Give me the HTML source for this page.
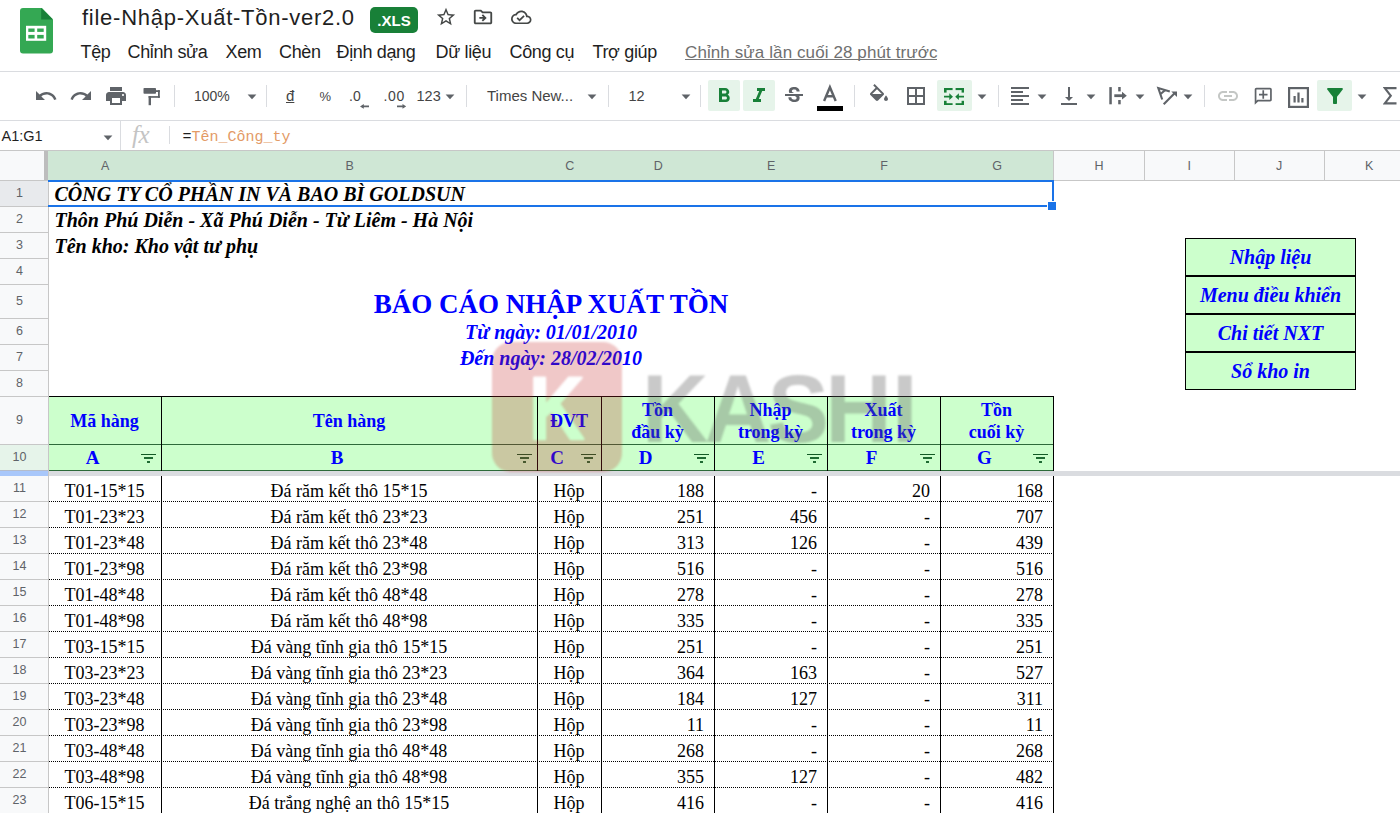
<!DOCTYPE html>
<html><head><meta charset="utf-8"><style>
html,body{margin:0;padding:0;width:1400px;height:813px;overflow:hidden;background:#fff;}
.t{position:absolute;white-space:nowrap;}
.r{position:absolute;}
</style></head><body>
<svg class="r" style="left:20px;top:8px;" width="33" height="46" viewBox="0 0 33 46"><path d="M3 0h19l11 11.5V42.5a3 3 0 0 1-3 3H3a3 3 0 0 1-3-3V3a3 3 0 0 1 3-3z" fill="#34a853"/><path d="M21.2 0L33 11.5H21.2z" fill="#188038"/><rect x="6" y="17.8" width="20.2" height="15" fill="#fff"/><rect x="8.3" y="20.5" width="6.3" height="3.4" fill="#34a853"/><rect x="17.2" y="20.5" width="6.5" height="3.4" fill="#34a853"/><rect x="8.3" y="26.9" width="6.3" height="3.6" fill="#34a853"/><rect x="17.2" y="26.9" width="6.5" height="3.6" fill="#34a853"/></svg>
<div class="t" style="left:82px;top:7.38px;font-size:22px;line-height:22px;font-family:'Liberation Sans', sans-serif;color:#1f1f1f;font-weight:normal;font-style:normal;letter-spacing:0.74px;">file-Nhập-Xuất-Tồn-ver2.0</div>
<div class="r" style="left:370px;top:7px;width:48px;height:26px;background:#188038;border-radius:5px;"></div>
<div class="t" style="left:370px;width:48px;text-align:center;top:12.80px;font-size:15px;line-height:15px;font-family:'Liberation Sans', sans-serif;color:#fff;font-weight:bold;font-style:normal;">.XLS</div>
<svg class="r" style="left:435px;top:6px;" width="22" height="22" viewBox="0 0 24 24"><path fill="#444746" d="M22 9.24l-7.19-.62L12 2 9.19 8.63 2 9.24l5.46 4.73L5.82 21 12 17.27 18.18 21l-1.63-7.03L22 9.24zM12 15.4l-3.76 2.27 1-4.28-3.32-2.88 4.38-.38L12 6.1l1.71 4.04 4.38.38-3.32 2.88 1 4.28L12 15.4z"/></svg>
<svg class="r" style="left:472px;top:6.3px;" width="22" height="22" viewBox="0 0 24 24"><path fill="#444746" d="M20 6h-8l-2-2H4c-1.1 0-1.99.9-1.99 2L2 18c0 1.1.9 2 2 2h16c1.1 0 2-.9 2-2V8c0-1.1-.9-2-2-2zm0 12H4V6h5.17l2 2H20v10zm-7.84-6H8v2h4.16l-1.59 1.59L11.99 17 16 13.01 11.99 9l-1.41 1.41L12.16 12z"/></svg>
<svg class="r" style="left:511px;top:7px;" width="20.5" height="20.5" viewBox="0 0 24 24"><path fill="#444746" d="M19.35 10.04C18.67 6.59 15.64 4 12 4 9.11 4 6.6 5.64 5.35 8.04 2.34 8.36 0 10.91 0 14c0 3.31 2.69 6 6 6h13c2.76 0 5-2.24 5-5 0-2.64-2.05-4.78-4.65-4.96zM19 18H6c-2.21 0-4-1.79-4-4 0-2.05 1.53-3.76 3.56-3.97l1.07-.11.5-.95C8.08 7.14 9.94 6 12 6c2.62 0 4.88 1.86 5.39 4.43l.3 1.5 1.53.11c1.56.1 2.78 1.41 2.78 2.96 0 1.65-1.35 3-3 3zm-9-3.82l-2.09-2.09L6.5 13.5 10 17l6.01-6.01-1.41-1.41z"/></svg>
<div class="t" style="left:80.5px;top:42.96px;font-size:18px;line-height:18px;font-family:'Liberation Sans', sans-serif;color:#1f1f1f;font-weight:normal;font-style:normal;letter-spacing:-0.35px;">Tệp</div>
<div class="t" style="left:127.5px;top:42.96px;font-size:18px;line-height:18px;font-family:'Liberation Sans', sans-serif;color:#1f1f1f;font-weight:normal;font-style:normal;letter-spacing:-0.35px;">Chỉnh sửa</div>
<div class="t" style="left:225.5px;top:42.96px;font-size:18px;line-height:18px;font-family:'Liberation Sans', sans-serif;color:#1f1f1f;font-weight:normal;font-style:normal;letter-spacing:-0.35px;">Xem</div>
<div class="t" style="left:279px;top:42.96px;font-size:18px;line-height:18px;font-family:'Liberation Sans', sans-serif;color:#1f1f1f;font-weight:normal;font-style:normal;letter-spacing:-0.35px;">Chèn</div>
<div class="t" style="left:336.5px;top:42.96px;font-size:18px;line-height:18px;font-family:'Liberation Sans', sans-serif;color:#1f1f1f;font-weight:normal;font-style:normal;letter-spacing:-0.35px;">Định dạng</div>
<div class="t" style="left:435.5px;top:42.96px;font-size:18px;line-height:18px;font-family:'Liberation Sans', sans-serif;color:#1f1f1f;font-weight:normal;font-style:normal;letter-spacing:-0.35px;">Dữ liệu</div>
<div class="t" style="left:509.5px;top:42.96px;font-size:18px;line-height:18px;font-family:'Liberation Sans', sans-serif;color:#1f1f1f;font-weight:normal;font-style:normal;letter-spacing:-0.35px;">Công cụ</div>
<div class="t" style="left:592.5px;top:42.96px;font-size:18px;line-height:18px;font-family:'Liberation Sans', sans-serif;color:#1f1f1f;font-weight:normal;font-style:normal;letter-spacing:-0.35px;">Trợ giúp</div>
<div class="t" style="left:685px;top:43.61px;font-size:17px;line-height:17px;font-family:'Liberation Sans', sans-serif;color:#6f6f6f;font-weight:normal;font-style:normal;letter-spacing:0.1px;">Chỉnh sửa lần cuối 28 phút trước</div>
<div class="r" style="left:685px;top:58.6px;width:252px;height:1.1px;background:#777;"></div>
<div class="r" style="left:0px;top:71px;width:1400px;height:1px;background:#dadce0;"></div>
<svg class="r" style="left:34.0px;top:84.0px;" width="24" height="24" viewBox="0 0 24 24"><path fill="#5f6368" d="M12.5 8c-2.65 0-5.05.99-6.9 2.6L2 7v9h9l-3.62-3.62c1.39-1.16 3.16-1.88 5.12-1.88 3.54 0 6.55 2.31 7.6 5.5l2.37-.78C21.08 11.03 17.15 8 12.5 8z"/></svg>
<svg class="r" style="left:69.0px;top:84.0px;" width="24" height="24" viewBox="0 0 24 24"><path fill="#5f6368" d="M18.4 10.6C16.55 8.99 14.15 8 11.5 8c-4.65 0-8.58 3.03-9.96 7.22L3.9 16c1.05-3.19 4.05-5.5 7.6-5.5 1.95 0 3.73.72 5.12 1.88L13 16h9V7l-3.6 3.6z"/></svg>
<svg class="r" style="left:104.0px;top:84.0px;" width="24" height="24" viewBox="0 0 24 24"><path fill="#5f6368" d="M19 8H5c-1.66 0-3 1.34-3 3v6h4v4h12v-4h4v-6c0-1.66-1.34-3-3-3zm-3 11H8v-5h8v5zm3-7c-.55 0-1-.45-1-1s.45-1 1-1 1 .45 1 1-.45 1-1 1zm-1-9H6v4h12V3z"/></svg>
<svg class="r" style="left:140px;top:85px;" width="22" height="22" viewBox="0 0 22 22"><g fill="#5f6368"><rect x="3.5" y="3" width="12.5" height="5.8" rx="0.8"/><rect x="16" y="5.2" width="3.8" height="1.8"/><rect x="18" y="5.2" width="1.8" height="7.6"/><rect x="8.6" y="11.1" width="11.2" height="1.7"/><rect x="8.6" y="11.1" width="2.4" height="9.1"/></g></svg>
<div class="r" style="left:174px;top:85px;width:1px;height:22px;background:#dadce0;"></div>
<div class="t" style="left:194px;top:89.15px;font-size:14px;line-height:14px;font-family:'Liberation Sans', sans-serif;color:#444;font-weight:normal;font-style:normal;">100%</div>
<svg class="r" style="left:245.5px;top:91px;" width="12" height="12" viewBox="0 0 12 12"><path fill="#5f6368" d="M1.6 3.6h8.8L6 8.2z"/></svg>
<div class="r" style="left:266px;top:85px;width:1px;height:22px;background:#dadce0;"></div>
<div class="t" style="left:286px;top:88.30px;font-size:15px;line-height:15px;font-family:'Liberation Sans', sans-serif;color:#444;font-weight:normal;font-style:normal;"><span style="text-decoration:underline">đ</span></div>
<div class="t" style="left:319.5px;top:90.00px;font-size:13px;line-height:13px;font-family:'Liberation Sans', sans-serif;color:#444;font-weight:normal;font-style:normal;">%</div>
<div class="t" style="left:349px;top:89.15px;font-size:14px;line-height:14px;font-family:'Liberation Sans', sans-serif;color:#444;font-weight:normal;font-style:normal;">.0</div>
<svg class="r" style="left:359.5px;top:103.8px;" width="9.3" height="4.8" viewBox="0 0 9.3 4.8"><path fill="#5f6368" d="M0 2.4L3.8 0V1.5H9.3V3.3H3.8V4.8z"/></svg>
<div class="t" style="left:383.5px;top:89.15px;font-size:14px;line-height:14px;font-family:'Liberation Sans', sans-serif;color:#444;font-weight:normal;font-style:normal;letter-spacing:0.7px;">.00</div>
<svg class="r" style="left:396.5px;top:103.8px;" width="9.3" height="4.8" viewBox="0 0 9.3 4.8"><path fill="#5f6368" d="M9.3 2.4L5.5 0V1.5H0V3.3H5.5V4.8z"/></svg>
<div class="t" style="left:416.5px;top:88.73px;font-size:14.5px;line-height:14.5px;font-family:'Liberation Sans', sans-serif;color:#444;font-weight:normal;font-style:normal;">123</div>
<svg class="r" style="left:443.5px;top:91px;" width="12" height="12" viewBox="0 0 12 12"><path fill="#5f6368" d="M1.6 3.6h8.8L6 8.2z"/></svg>
<div class="r" style="left:466px;top:85px;width:1px;height:22px;background:#dadce0;"></div>
<div class="t" style="left:487px;top:88.30px;font-size:15px;line-height:15px;font-family:'Liberation Sans', sans-serif;color:#444;font-weight:normal;font-style:normal;">Times New...</div>
<svg class="r" style="left:585.5px;top:91px;" width="12" height="12" viewBox="0 0 12 12"><path fill="#5f6368" d="M1.6 3.6h8.8L6 8.2z"/></svg>
<div class="r" style="left:608px;top:85px;width:1px;height:22px;background:#dadce0;"></div>
<div class="t" style="left:628.5px;top:88.73px;font-size:14.5px;line-height:14.5px;font-family:'Liberation Sans', sans-serif;color:#444;font-weight:normal;font-style:normal;">12</div>
<svg class="r" style="left:679.5px;top:91px;" width="12" height="12" viewBox="0 0 12 12"><path fill="#5f6368" d="M1.6 3.6h8.8L6 8.2z"/></svg>
<div class="r" style="left:700px;top:85px;width:1px;height:22px;background:#dadce0;"></div>
<div class="r" style="left:708px;top:80px;width:32px;height:31px;background:#e6f4ea;border-radius:2px;"></div>
<div class="r" style="left:743px;top:80px;width:32px;height:31px;background:#e6f4ea;border-radius:2px;"></div>
<svg class="r" style="left:712.0px;top:84.0px;" width="24" height="24" viewBox="0 0 24 24"><path fill="#188038" d="M15.6 10.79c.97-.67 1.65-1.77 1.65-2.79 0-2.26-1.75-4-4-4H7v14h7.04c2.09 0 3.71-1.7 3.71-3.79 0-1.52-.86-2.82-2.15-3.42zM10 6.5h3c.83 0 1.5.67 1.5 1.5s-.67 1.5-1.5 1.5h-3v-3zm3.5 9H10v-3h3.5c.83 0 1.5.67 1.5 1.5s-.67 1.5-1.5 1.5z"/></svg>
<svg class="r" style="left:747.0px;top:84.0px;" width="24" height="24" viewBox="0 0 24 24"><path fill="#188038" d="M10 4v3h2.21l-3.42 8H6v3h8v-3h-2.21l3.42-8H18V4z"/></svg>
<svg class="r" style="left:782.0px;top:84.0px;" width="24" height="24" viewBox="0 0 24 24"><path fill="#5f6368" d="M7.24 8.75c-.26-.48-.39-1.03-.39-1.67 0-.61.13-1.16.4-1.67.26-.5.63-.93 1.11-1.29.48-.35 1.05-.63 1.7-.83.66-.19 1.39-.29 2.18-.29.81 0 1.54.11 2.21.34.66.22 1.23.54 1.69.94.47.4.83.88 1.08 1.43.25.55.38 1.15.38 1.81h-3.01c0-.31-.05-.59-.15-.85-.09-.27-.24-.49-.44-.68-.2-.19-.45-.33-.75-.44-.3-.1-.66-.16-1.06-.16-.39 0-.74.04-1.03.13-.29.09-.53.21-.72.36-.19.16-.34.34-.44.55-.1.21-.15.43-.15.66 0 .48.25.88.74 1.21.38.25.77.48 1.41.7H7.39c-.05-.08-.11-.17-.15-.25zM21 12v-2H3v2h9.62c.18.07.4.14.55.2.37.17.66.34.87.51.21.17.35.36.43.57.07.2.11.43.11.69 0 .23-.05.45-.14.66-.09.2-.23.38-.42.53-.19.15-.42.26-.71.35-.29.08-.63.13-1.01.13-.43 0-.83-.04-1.18-.13s-.66-.23-.91-.42c-.25-.19-.45-.44-.59-.75-.14-.31-.25-.76-.25-1.21H6.4c0 .55.08 1.13.24 1.58.16.45.37.85.65 1.210.28.35.6.66.98.92.37.26.78.48 1.22.65.44.17.9.3 1.38.39.48.08.96.13 1.44.13.8 0 1.53-.09 2.18-.28s1.21-.45 1.67-.79c.46-.34.82-.77 1.07-1.27s.38-1.07.38-1.71c0-.6-.1-1.14-.31-1.61-.05-.11-.11-.23-.17-.33H21z"/></svg>
<svg class="r" style="left:817px;top:83px;" width="26" height="28" viewBox="0 0 26 28"><path fill="none" stroke="#5f6368" stroke-width="2.4" d="M7.1 18L12.9 4.2 18.7 18M9.3 13.2H16.5"/><rect x="0" y="23" width="26" height="5" fill="#000"/></svg>
<div class="r" style="left:854px;top:85px;width:1px;height:22px;background:#dadce0;"></div>
<svg class="r" style="left:866.5px;top:84.0px;" width="24" height="24" viewBox="0 0 24 24"><path fill="#5f6368" d="M16.56 8.94L7.62 0 6.21 1.41l2.38 2.38-5.15 5.15c-.59.59-.59 1.54 0 2.12l5.5 5.5c.29.29.68.44 1.06.44s.77-.15 1.06-.44l5.5-5.5c.59-.58.59-1.53 0-2.12zM5.21 10L10 5.21 14.79 10H5.21zM19 11.5s-2 2.17-2 3.5c0 1.1.9 2 2 2s2-.9 2-2c0-1.33-2-3.5-2-3.5z"/></svg>
<svg class="r" style="left:904.0px;top:84.0px;" width="24" height="24" viewBox="0 0 24 24"><path fill="#5f6368" d="M3 3v18h18V3H3zm8 16H5v-6h6v6zm0-8H5V5h6v6zm8 8h-6v-6h6v6zm0-8h-6V5h6v6z"/></svg>
<div class="r" style="left:937px;top:80px;width:35px;height:31px;background:#e6f4ea;border-radius:2px;"></div>
<svg class="r" style="left:944.3px;top:88px;" width="20.2" height="17.4" viewBox="0 0 20.2 17.4"><g fill="#188038"><rect x="0" y="0" width="8.6" height="2.1"/><rect x="0" y="0" width="2.6" height="4.6"/><rect x="11.6" y="0" width="8.6" height="2.1"/><rect x="17.6" y="0" width="2.6" height="4.6"/><rect x="0" y="15.2" width="8.6" height="2.2"/><rect x="0" y="12.8" width="2.6" height="4.6"/><rect x="11.6" y="15.2" width="8.6" height="2.2"/><rect x="17.6" y="12.8" width="2.6" height="4.6"/><path d="M0 7.8h5.3V5.3L9 8.7 5.3 12.1V9.6H0z"/><path d="M20.2 7.8h-5.3V5.3L11.2 8.7l3.7 3.4V9.6h5.3z"/></g></svg>
<svg class="r" style="left:975.5px;top:91px;" width="12" height="12" viewBox="0 0 12 12"><path fill="#5f6368" d="M1.6 3.6h8.8L6 8.2z"/></svg>
<div class="r" style="left:998px;top:85px;width:1px;height:22px;background:#dadce0;"></div>
<svg class="r" style="left:1008.0px;top:84.0px;" width="24" height="24" viewBox="0 0 24 24"><path fill="#5f6368" d="M15 15H3v2h12v-2zm0-8H3v2h12V7zM3 13h18v-2H3v2zm0 8h18v-2H3v2zM3 3v2h18V3H3z"/></svg>
<svg class="r" style="left:1035.5px;top:91px;" width="12" height="12" viewBox="0 0 12 12"><path fill="#5f6368" d="M1.6 3.6h8.8L6 8.2z"/></svg>
<svg class="r" style="left:1057.0px;top:84.0px;" width="24" height="24" viewBox="0 0 24 24"><path fill="#5f6368" d="M16 13h-3V3h-2v10H8l4 4 4-4zM4 19v2h16v-2H4z"/></svg>
<svg class="r" style="left:1084.5px;top:91px;" width="12" height="12" viewBox="0 0 12 12"><path fill="#5f6368" d="M1.6 3.6h8.8L6 8.2z"/></svg>
<svg class="r" style="left:1100px;top:80px;" width="30" height="30" viewBox="0 0 30 30"><g fill="#5f6368"><rect x="9.3" y="7.1" width="2.5" height="17.2"/><rect x="18.2" y="7" width="2.5" height="4.4"/><rect x="18.2" y="20" width="2.5" height="4.3"/><rect x="14.3" y="14.3" width="8" height="2.8"/><path d="M22 11.8l4.8 3.9-4.8 3.9z"/></g></svg>
<svg class="r" style="left:1133.5px;top:91px;" width="12" height="12" viewBox="0 0 12 12"><path fill="#5f6368" d="M1.6 3.6h8.8L6 8.2z"/></svg>
<svg class="r" style="left:1156px;top:85px;" width="22" height="22" viewBox="0 0 22 22"><g fill="none" stroke="#5f6368" stroke-width="2.1" stroke-linejoin="miter"><path d="M6.2 14.5L2.3 3 13.8 6.6M4.3 9.2L9 5.2"/><path d="M7.7 19.2L18.6 8.3"/></g><path fill="#5f6368" d="M21 6.4H15.3L21 12.1z"/></svg>
<svg class="r" style="left:1181.5px;top:91px;" width="12" height="12" viewBox="0 0 12 12"><path fill="#5f6368" d="M1.6 3.6h8.8L6 8.2z"/></svg>
<div class="r" style="left:1204px;top:85px;width:1px;height:22px;background:#dadce0;"></div>
<svg class="r" style="left:1216.0px;top:84.0px;" width="24" height="24" viewBox="0 0 24 24"><path fill="#c4c7c5" d="M3.9 12c0-1.71 1.39-3.1 3.1-3.1h4V7H7c-2.76 0-5 2.24-5 5s2.24 5 5 5h4v-1.9H7c-1.71 0-3.1-1.39-3.1-3.1zM8 13h8v-2H8v2zm9-6h-4v1.9h4c1.71 0 3.1 1.39 3.1 3.1s-1.39 3.1-3.1 3.1h-4V17h4c2.76 0 5-2.24 5-5s-2.24-5-5-5z"/></svg>
<svg class="r" style="left:1252.5px;top:85.5px;" width="20.5" height="20.5" viewBox="0 0 24 24"><path fill="#5f6368" d="M20 2H4c-1.1 0-2 .9-2 2v18l4-4h14c1.1 0 2-.9 2-2V4c0-1.1-.9-2-2-2zm0 14H5.17L4 17.17V4h16v12zM11 5h2v4h4v2h-4v4h-2v-4H7V9h4z"/></svg>
<svg class="r" style="left:1287.5px;top:86.5px;" width="21" height="21" viewBox="0 0 21 21"><rect x="1.1" y="1.1" width="18.8" height="18.8" fill="none" stroke="#5f6368" stroke-width="2.2"/><g fill="#5f6368"><rect x="5.5" y="9" width="2.2" height="6.5"/><rect x="9.4" y="5.5" width="2.2" height="10"/><rect x="13.3" y="11" width="2.2" height="4.5"/></g></svg>
<div class="r" style="left:1317px;top:80px;width:35px;height:31px;background:#e6f4ea;border-radius:2px;"></div>
<svg class="r" style="left:1322.5px;top:84.0px;" width="24" height="24" viewBox="0 0 24 24"><path fill="#188038" d="M4.25 5.61C6.27 8.2 10 13 10 13v6c0 .55.45 1 1 1h2c.55 0 1-.45 1-1v-6s3.72-4.8 5.74-7.39c.51-.66.04-1.61-.79-1.61H5.04c-.83 0-1.3.95-.79 1.61z"/></svg>
<svg class="r" style="left:1355.5px;top:91px;" width="12" height="12" viewBox="0 0 12 12"><path fill="#5f6368" d="M1.6 3.6h8.8L6 8.2z"/></svg>
<svg class="r" style="left:1382.5px;top:87px;" width="14" height="17.5" viewBox="0 0 14 17.5"><path fill="none" stroke="#5f6368" stroke-width="2.1" d="M13.5 1.1H1.8L7.8 8.75 1.8 16.4H13.5"/></svg>
<div class="r" style="left:0px;top:120px;width:1400px;height:1px;background:#dadce0;"></div>
<div class="t" style="left:1.5px;top:128.73px;font-size:14.5px;line-height:14.5px;font-family:'Liberation Sans', sans-serif;color:#1f1f1f;font-weight:normal;font-style:normal;">A1:G1</div>
<svg class="r" style="left:101.5px;top:132px;" width="12" height="12" viewBox="0 0 12 12"><path fill="#5f6368" d="M1.6 3.6h8.8L6 8.2z"/></svg>
<div class="r" style="left:120px;top:121px;width:1px;height:29px;background:#dadce0;"></div>
<div class="t" style="left:132px;top:121.56px;font-size:25px;line-height:25px;font-family:'Liberation Serif', serif;color:#c4c4c4;font-weight:normal;font-style:italic;letter-spacing:-0.5px;">fx</div>
<div class="r" style="left:169px;top:126px;width:1px;height:18px;background:#dadce0;"></div>
<div class="t" style="left:182.5px;top:129.50px;font-size:15px;line-height:15px;font-family:'Liberation Mono', monospace;color:#1f1f1f;font-weight:normal;font-style:normal;">=<span style="color:#e39a66">Tên_Công_ty</span></div>
<div class="r" style="left:0px;top:150px;width:1400px;height:30px;background:#f8f9fa;"></div>
<div class="r" style="left:48px;top:150px;width:1005px;height:30px;background:#cfe7d5;"></div>
<div class="r" style="left:0px;top:150px;width:1400px;height:1px;background:#c7c7c7;"></div>
<div class="r" style="left:0px;top:180px;width:1400px;height:1px;background:#c7c7c7;"></div>
<div class="r" style="left:44px;top:151px;width:4px;height:29px;background:#bdbdbd;"></div>
<div class="t" style="left:-294.8px;width:800px;text-align:center;top:160.22px;font-size:12.5px;line-height:12.5px;font-family:'Liberation Sans', sans-serif;color:#5f6368;font-weight:normal;font-style:normal;">A</div>
<div class="t" style="left:-50.30000000000001px;width:800px;text-align:center;top:160.22px;font-size:12.5px;line-height:12.5px;font-family:'Liberation Sans', sans-serif;color:#5f6368;font-weight:normal;font-style:normal;">B</div>
<div class="t" style="left:169.70000000000005px;width:800px;text-align:center;top:160.22px;font-size:12.5px;line-height:12.5px;font-family:'Liberation Sans', sans-serif;color:#5f6368;font-weight:normal;font-style:normal;">C</div>
<div class="t" style="left:258.20000000000005px;width:800px;text-align:center;top:160.22px;font-size:12.5px;line-height:12.5px;font-family:'Liberation Sans', sans-serif;color:#5f6368;font-weight:normal;font-style:normal;">D</div>
<div class="t" style="left:371.20000000000005px;width:800px;text-align:center;top:160.22px;font-size:12.5px;line-height:12.5px;font-family:'Liberation Sans', sans-serif;color:#5f6368;font-weight:normal;font-style:normal;">E</div>
<div class="t" style="left:484.20000000000005px;width:800px;text-align:center;top:160.22px;font-size:12.5px;line-height:12.5px;font-family:'Liberation Sans', sans-serif;color:#5f6368;font-weight:normal;font-style:normal;">F</div>
<div class="t" style="left:597.2px;width:800px;text-align:center;top:160.22px;font-size:12.5px;line-height:12.5px;font-family:'Liberation Sans', sans-serif;color:#5f6368;font-weight:normal;font-style:normal;">G</div>
<div class="r" style="left:1053px;top:151px;width:1px;height:29px;background:#c7c7c7;"></div>
<div class="t" style="left:698.95px;width:800px;text-align:center;top:160.22px;font-size:12.5px;line-height:12.5px;font-family:'Liberation Sans', sans-serif;color:#5f6368;font-weight:normal;font-style:normal;">H</div>
<div class="r" style="left:1143.5px;top:151px;width:1px;height:29px;background:#c7c7c7;"></div>
<div class="t" style="left:789.2px;width:800px;text-align:center;top:160.22px;font-size:12.5px;line-height:12.5px;font-family:'Liberation Sans', sans-serif;color:#5f6368;font-weight:normal;font-style:normal;">I</div>
<div class="r" style="left:1233.5px;top:151px;width:1px;height:29px;background:#c7c7c7;"></div>
<div class="t" style="left:879.2px;width:800px;text-align:center;top:160.22px;font-size:12.5px;line-height:12.5px;font-family:'Liberation Sans', sans-serif;color:#5f6368;font-weight:normal;font-style:normal;">J</div>
<div class="r" style="left:1323.5px;top:151px;width:1px;height:29px;background:#c7c7c7;"></div>
<div class="t" style="left:969.2px;width:800px;text-align:center;top:160.22px;font-size:12.5px;line-height:12.5px;font-family:'Liberation Sans', sans-serif;color:#5f6368;font-weight:normal;font-style:normal;">K</div>
<div class="r" style="left:1413px;top:151px;width:1px;height:29px;background:#c7c7c7;"></div>
<div class="r" style="left:0px;top:180px;width:48px;height:633px;background:#f8f9fa;"></div>
<div class="r" style="left:0px;top:180px;width:48px;height:26px;background:#e8eaed;"></div>
<div class="r" style="left:0px;top:444px;width:48px;height:26px;background:#e6f4ea;"></div>
<div class="r" style="left:0px;top:180px;width:48px;height:1px;background:#c7c7c7;"></div>
<div class="t" style="left:0px;width:39px;text-align:center;top:186.92px;font-size:12.5px;line-height:12.5px;font-family:'Liberation Sans', sans-serif;color:#5f6368;font-weight:normal;font-style:normal;">1</div>
<div class="r" style="left:0px;top:206px;width:48px;height:1px;background:#c7c7c7;"></div>
<div class="t" style="left:0px;width:39px;text-align:center;top:212.92px;font-size:12.5px;line-height:12.5px;font-family:'Liberation Sans', sans-serif;color:#5f6368;font-weight:normal;font-style:normal;">2</div>
<div class="r" style="left:0px;top:232px;width:48px;height:1px;background:#c7c7c7;"></div>
<div class="t" style="left:0px;width:39px;text-align:center;top:238.92px;font-size:12.5px;line-height:12.5px;font-family:'Liberation Sans', sans-serif;color:#5f6368;font-weight:normal;font-style:normal;">3</div>
<div class="r" style="left:0px;top:258px;width:48px;height:1px;background:#c7c7c7;"></div>
<div class="t" style="left:0px;width:39px;text-align:center;top:264.92px;font-size:12.5px;line-height:12.5px;font-family:'Liberation Sans', sans-serif;color:#5f6368;font-weight:normal;font-style:normal;">4</div>
<div class="r" style="left:0px;top:284px;width:48px;height:1px;background:#c7c7c7;"></div>
<div class="t" style="left:0px;width:39px;text-align:center;top:294.92px;font-size:12.5px;line-height:12.5px;font-family:'Liberation Sans', sans-serif;color:#5f6368;font-weight:normal;font-style:normal;">5</div>
<div class="r" style="left:0px;top:318px;width:48px;height:1px;background:#c7c7c7;"></div>
<div class="t" style="left:0px;width:39px;text-align:center;top:324.92px;font-size:12.5px;line-height:12.5px;font-family:'Liberation Sans', sans-serif;color:#5f6368;font-weight:normal;font-style:normal;">6</div>
<div class="r" style="left:0px;top:344px;width:48px;height:1px;background:#c7c7c7;"></div>
<div class="t" style="left:0px;width:39px;text-align:center;top:350.92px;font-size:12.5px;line-height:12.5px;font-family:'Liberation Sans', sans-serif;color:#5f6368;font-weight:normal;font-style:normal;">7</div>
<div class="r" style="left:0px;top:370px;width:48px;height:1px;background:#c7c7c7;"></div>
<div class="t" style="left:0px;width:39px;text-align:center;top:376.92px;font-size:12.5px;line-height:12.5px;font-family:'Liberation Sans', sans-serif;color:#5f6368;font-weight:normal;font-style:normal;">8</div>
<div class="r" style="left:0px;top:396px;width:48px;height:1px;background:#c7c7c7;"></div>
<div class="t" style="left:0px;width:39px;text-align:center;top:413.92px;font-size:12.5px;line-height:12.5px;font-family:'Liberation Sans', sans-serif;color:#5f6368;font-weight:normal;font-style:normal;">9</div>
<div class="r" style="left:0px;top:444px;width:48px;height:1px;background:#c7c7c7;"></div>
<div class="t" style="left:0px;width:39px;text-align:center;top:450.92px;font-size:12.5px;line-height:12.5px;font-family:'Liberation Sans', sans-serif;color:#5f6368;font-weight:normal;font-style:normal;">10</div>
<div class="r" style="left:0px;top:475px;width:48px;height:1px;background:#c7c7c7;"></div>
<div class="t" style="left:0px;width:39px;text-align:center;top:482.42px;font-size:12.5px;line-height:12.5px;font-family:'Liberation Sans', sans-serif;color:#5f6368;font-weight:normal;font-style:normal;">11</div>
<div class="r" style="left:0px;top:501px;width:48px;height:1px;background:#c7c7c7;"></div>
<div class="t" style="left:0px;width:39px;text-align:center;top:508.42px;font-size:12.5px;line-height:12.5px;font-family:'Liberation Sans', sans-serif;color:#5f6368;font-weight:normal;font-style:normal;">12</div>
<div class="r" style="left:0px;top:527px;width:48px;height:1px;background:#c7c7c7;"></div>
<div class="t" style="left:0px;width:39px;text-align:center;top:534.42px;font-size:12.5px;line-height:12.5px;font-family:'Liberation Sans', sans-serif;color:#5f6368;font-weight:normal;font-style:normal;">13</div>
<div class="r" style="left:0px;top:553px;width:48px;height:1px;background:#c7c7c7;"></div>
<div class="t" style="left:0px;width:39px;text-align:center;top:560.42px;font-size:12.5px;line-height:12.5px;font-family:'Liberation Sans', sans-serif;color:#5f6368;font-weight:normal;font-style:normal;">14</div>
<div class="r" style="left:0px;top:579px;width:48px;height:1px;background:#c7c7c7;"></div>
<div class="t" style="left:0px;width:39px;text-align:center;top:586.42px;font-size:12.5px;line-height:12.5px;font-family:'Liberation Sans', sans-serif;color:#5f6368;font-weight:normal;font-style:normal;">15</div>
<div class="r" style="left:0px;top:605px;width:48px;height:1px;background:#c7c7c7;"></div>
<div class="t" style="left:0px;width:39px;text-align:center;top:612.42px;font-size:12.5px;line-height:12.5px;font-family:'Liberation Sans', sans-serif;color:#5f6368;font-weight:normal;font-style:normal;">16</div>
<div class="r" style="left:0px;top:631px;width:48px;height:1px;background:#c7c7c7;"></div>
<div class="t" style="left:0px;width:39px;text-align:center;top:638.42px;font-size:12.5px;line-height:12.5px;font-family:'Liberation Sans', sans-serif;color:#5f6368;font-weight:normal;font-style:normal;">17</div>
<div class="r" style="left:0px;top:657px;width:48px;height:1px;background:#c7c7c7;"></div>
<div class="t" style="left:0px;width:39px;text-align:center;top:664.42px;font-size:12.5px;line-height:12.5px;font-family:'Liberation Sans', sans-serif;color:#5f6368;font-weight:normal;font-style:normal;">18</div>
<div class="r" style="left:0px;top:683px;width:48px;height:1px;background:#c7c7c7;"></div>
<div class="t" style="left:0px;width:39px;text-align:center;top:690.42px;font-size:12.5px;line-height:12.5px;font-family:'Liberation Sans', sans-serif;color:#5f6368;font-weight:normal;font-style:normal;">19</div>
<div class="r" style="left:0px;top:709px;width:48px;height:1px;background:#c7c7c7;"></div>
<div class="t" style="left:0px;width:39px;text-align:center;top:716.42px;font-size:12.5px;line-height:12.5px;font-family:'Liberation Sans', sans-serif;color:#5f6368;font-weight:normal;font-style:normal;">20</div>
<div class="r" style="left:0px;top:735px;width:48px;height:1px;background:#c7c7c7;"></div>
<div class="t" style="left:0px;width:39px;text-align:center;top:742.42px;font-size:12.5px;line-height:12.5px;font-family:'Liberation Sans', sans-serif;color:#5f6368;font-weight:normal;font-style:normal;">21</div>
<div class="r" style="left:0px;top:761px;width:48px;height:1px;background:#c7c7c7;"></div>
<div class="t" style="left:0px;width:39px;text-align:center;top:768.42px;font-size:12.5px;line-height:12.5px;font-family:'Liberation Sans', sans-serif;color:#5f6368;font-weight:normal;font-style:normal;">22</div>
<div class="r" style="left:0px;top:787px;width:48px;height:1px;background:#c7c7c7;"></div>
<div class="t" style="left:0px;width:39px;text-align:center;top:794.42px;font-size:12.5px;line-height:12.5px;font-family:'Liberation Sans', sans-serif;color:#5f6368;font-weight:normal;font-style:normal;">23</div>
<div class="r" style="left:48px;top:180px;width:1px;height:633px;background:#c7c7c7;"></div>
<div class="r" style="left:0px;top:470px;width:48px;height:1px;background:#b4bccb;"></div>
<div class="r" style="left:0px;top:471px;width:48px;height:5px;background:#a8c7fa;"></div>
<div class="r" style="left:49px;top:471px;width:1351px;height:5px;background:#dadce0;"></div>
<div class="t" style="left:54.5px;top:184.05px;font-size:20px;line-height:20px;font-family:'Liberation Serif', serif;color:#000;font-weight:bold;font-style:italic;">CÔNG TY CỔ PHẦN IN VÀ BAO BÌ GOLDSUN</div>
<div class="t" style="left:54.5px;top:209.75px;font-size:20px;line-height:20px;font-family:'Liberation Serif', serif;color:#000;font-weight:bold;font-style:italic;">Thôn Phú Diễn - Xã Phú Diễn - Từ Liêm - Hà Nội</div>
<div class="t" style="left:54.5px;top:236.25px;font-size:20px;line-height:20px;font-family:'Liberation Serif', serif;color:#000;font-weight:bold;font-style:italic;">Tên kho: Kho vật tư phụ</div>
<div class="r" style="left:48px;top:180px;width:1005px;height:2px;background:#1a73e8;"></div>
<div class="r" style="left:48px;top:205px;width:1005px;height:2px;background:#1a73e8;"></div>
<div class="r" style="left:1052px;top:180px;width:2px;height:27px;background:#1a73e8;"></div>
<div class="r" style="left:1048px;top:202px;width:8px;height:8px;background:#1a73e8;outline:1px solid #fff;"></div>
<div class="t" style="left:151px;width:800px;text-align:center;top:290.89px;font-size:27px;line-height:27px;font-family:'Liberation Serif', serif;color:#0000ff;font-weight:bold;font-style:normal;">BÁO CÁO NHẬP XUẤT TỒN</div>
<div class="t" style="left:151px;width:800px;text-align:center;top:322.25px;font-size:20px;line-height:20px;font-family:'Liberation Serif', serif;color:#0000ff;font-weight:bold;font-style:italic;">Từ ngày: 01/01/2010</div>
<div class="t" style="left:151px;width:800px;text-align:center;top:348.25px;font-size:20px;line-height:20px;font-family:'Liberation Serif', serif;color:#0000ff;font-weight:bold;font-style:italic;">Đến ngày: 28/02/2010</div>
<div class="r" style="left:49px;top:397px;width:1005px;height:74px;background:#ccffcc;"></div>
<div class="r" style="left:49px;top:396px;width:1005px;height:1px;background:#000;"></div>
<div class="r" style="left:49px;top:444px;width:1005px;height:1px;background:#2d6a3a;"></div>
<div class="r" style="left:49px;top:470px;width:1005px;height:1px;background:#2d6a3a;"></div>
<div class="r" style="left:161px;top:396px;width:1px;height:75px;background:#000;"></div>
<div class="r" style="left:161px;top:476px;width:1px;height:340px;background:#000;"></div>
<div class="r" style="left:537px;top:396px;width:1px;height:75px;background:#000;"></div>
<div class="r" style="left:537px;top:476px;width:1px;height:340px;background:#000;"></div>
<div class="r" style="left:601px;top:396px;width:1px;height:75px;background:#000;"></div>
<div class="r" style="left:601px;top:476px;width:1px;height:340px;background:#000;"></div>
<div class="r" style="left:714px;top:396px;width:1px;height:75px;background:#000;"></div>
<div class="r" style="left:714px;top:476px;width:1px;height:340px;background:#000;"></div>
<div class="r" style="left:827px;top:396px;width:1px;height:75px;background:#000;"></div>
<div class="r" style="left:827px;top:476px;width:1px;height:340px;background:#000;"></div>
<div class="r" style="left:940px;top:396px;width:1px;height:75px;background:#000;"></div>
<div class="r" style="left:940px;top:476px;width:1px;height:340px;background:#000;"></div>
<div class="r" style="left:1053px;top:396px;width:1px;height:75px;background:#000;"></div>
<div class="r" style="left:1053px;top:476px;width:1px;height:340px;background:#000;"></div>
<div class="t" style="left:48px;width:113px;text-align:center;top:411.93px;font-size:18px;line-height:18px;font-family:'Liberation Serif', serif;color:#0000ff;font-weight:bold;font-style:normal;">Mã hàng</div>
<div class="t" style="left:161px;width:376px;text-align:center;top:411.93px;font-size:18px;line-height:18px;font-family:'Liberation Serif', serif;color:#0000ff;font-weight:bold;font-style:normal;">Tên hàng</div>
<div class="t" style="left:537px;width:64px;text-align:center;top:411.93px;font-size:18px;line-height:18px;font-family:'Liberation Serif', serif;color:#0000ff;font-weight:bold;font-style:normal;">ĐVT</div>
<div class="t" style="left:601px;width:113px;text-align:center;top:401.12px;font-size:18px;line-height:18px;font-family:'Liberation Serif', serif;color:#0000ff;font-weight:bold;font-style:normal;">Tồn</div>
<div class="t" style="left:601px;width:113px;text-align:center;top:422.62px;font-size:18px;line-height:18px;font-family:'Liberation Serif', serif;color:#0000ff;font-weight:bold;font-style:normal;">đầu kỳ</div>
<div class="t" style="left:714px;width:113px;text-align:center;top:401.12px;font-size:18px;line-height:18px;font-family:'Liberation Serif', serif;color:#0000ff;font-weight:bold;font-style:normal;">Nhập</div>
<div class="t" style="left:714px;width:113px;text-align:center;top:422.62px;font-size:18px;line-height:18px;font-family:'Liberation Serif', serif;color:#0000ff;font-weight:bold;font-style:normal;">trong kỳ</div>
<div class="t" style="left:827px;width:113px;text-align:center;top:401.12px;font-size:18px;line-height:18px;font-family:'Liberation Serif', serif;color:#0000ff;font-weight:bold;font-style:normal;">Xuất</div>
<div class="t" style="left:827px;width:113px;text-align:center;top:422.62px;font-size:18px;line-height:18px;font-family:'Liberation Serif', serif;color:#0000ff;font-weight:bold;font-style:normal;">trong kỳ</div>
<div class="t" style="left:940px;width:113px;text-align:center;top:401.12px;font-size:18px;line-height:18px;font-family:'Liberation Serif', serif;color:#0000ff;font-weight:bold;font-style:normal;">Tồn</div>
<div class="t" style="left:940px;width:113px;text-align:center;top:422.62px;font-size:18px;line-height:18px;font-family:'Liberation Serif', serif;color:#0000ff;font-weight:bold;font-style:normal;">cuối kỳ</div>
<div class="t" style="left:48px;width:89px;text-align:center;top:447.79px;font-size:19px;line-height:19px;font-family:'Liberation Serif', serif;color:#0000ff;font-weight:bold;font-style:normal;">A</div>
<div class="r" style="left:140.8px;top:453.8px;width:15px;height:1.3px;background:#125a25;"></div>
<div class="r" style="left:144px;top:457.2px;width:9px;height:1.6px;background:#1f6b33;"></div>
<div class="r" style="left:147px;top:461px;width:2.8px;height:1.8px;background:#1f6b33;"></div>
<div class="t" style="left:161px;width:352px;text-align:center;top:447.79px;font-size:19px;line-height:19px;font-family:'Liberation Serif', serif;color:#0000ff;font-weight:bold;font-style:normal;">B</div>
<div class="r" style="left:516.8px;top:453.8px;width:15px;height:1.3px;background:#125a25;"></div>
<div class="r" style="left:520px;top:457.2px;width:9px;height:1.6px;background:#1f6b33;"></div>
<div class="r" style="left:523px;top:461px;width:2.8px;height:1.8px;background:#1f6b33;"></div>
<div class="t" style="left:537px;width:40px;text-align:center;top:447.79px;font-size:19px;line-height:19px;font-family:'Liberation Serif', serif;color:#0000ff;font-weight:bold;font-style:normal;">C</div>
<div class="r" style="left:580.8px;top:453.8px;width:15px;height:1.3px;background:#125a25;"></div>
<div class="r" style="left:584px;top:457.2px;width:9px;height:1.6px;background:#1f6b33;"></div>
<div class="r" style="left:587px;top:461px;width:2.8px;height:1.8px;background:#1f6b33;"></div>
<div class="t" style="left:601px;width:89px;text-align:center;top:447.79px;font-size:19px;line-height:19px;font-family:'Liberation Serif', serif;color:#0000ff;font-weight:bold;font-style:normal;">D</div>
<div class="r" style="left:693.8px;top:453.8px;width:15px;height:1.3px;background:#125a25;"></div>
<div class="r" style="left:697px;top:457.2px;width:9px;height:1.6px;background:#1f6b33;"></div>
<div class="r" style="left:700px;top:461px;width:2.8px;height:1.8px;background:#1f6b33;"></div>
<div class="t" style="left:714px;width:89px;text-align:center;top:447.79px;font-size:19px;line-height:19px;font-family:'Liberation Serif', serif;color:#0000ff;font-weight:bold;font-style:normal;">E</div>
<div class="r" style="left:806.8px;top:453.8px;width:15px;height:1.3px;background:#125a25;"></div>
<div class="r" style="left:810px;top:457.2px;width:9px;height:1.6px;background:#1f6b33;"></div>
<div class="r" style="left:813px;top:461px;width:2.8px;height:1.8px;background:#1f6b33;"></div>
<div class="t" style="left:827px;width:89px;text-align:center;top:447.79px;font-size:19px;line-height:19px;font-family:'Liberation Serif', serif;color:#0000ff;font-weight:bold;font-style:normal;">F</div>
<div class="r" style="left:919.8px;top:453.8px;width:15px;height:1.3px;background:#125a25;"></div>
<div class="r" style="left:923px;top:457.2px;width:9px;height:1.6px;background:#1f6b33;"></div>
<div class="r" style="left:926px;top:461px;width:2.8px;height:1.8px;background:#1f6b33;"></div>
<div class="t" style="left:940px;width:89px;text-align:center;top:447.79px;font-size:19px;line-height:19px;font-family:'Liberation Serif', serif;color:#0000ff;font-weight:bold;font-style:normal;">G</div>
<div class="r" style="left:1032.8px;top:453.8px;width:15px;height:1.3px;background:#125a25;"></div>
<div class="r" style="left:1036px;top:457.2px;width:9px;height:1.6px;background:#1f6b33;"></div>
<div class="r" style="left:1039px;top:461px;width:2.8px;height:1.8px;background:#1f6b33;"></div>
<div class="t" style="left:48px;width:113px;text-align:center;top:481.62px;font-size:18px;line-height:18px;font-family:'Liberation Serif', serif;color:#000;font-weight:normal;font-style:normal;">T01-15*15</div>
<div class="t" style="left:161px;width:376px;text-align:center;top:481.62px;font-size:18px;line-height:18px;font-family:'Liberation Serif', serif;color:#000;font-weight:normal;font-style:normal;">Đá răm kết thô 15*15</div>
<div class="t" style="left:537px;width:64px;text-align:center;top:481.62px;font-size:18px;line-height:18px;font-family:'Liberation Serif', serif;color:#000;font-weight:normal;font-style:normal;">Hộp</div>
<div class="t" style="left:104px;width:600px;text-align:right;top:481.62px;font-size:18px;line-height:18px;font-family:'Liberation Serif', serif;color:#000;font-weight:normal;font-style:normal;">188</div>
<div class="t" style="left:217px;width:600px;text-align:right;top:481.62px;font-size:18px;line-height:18px;font-family:'Liberation Serif', serif;color:#000;font-weight:normal;font-style:normal;">-</div>
<div class="t" style="left:330px;width:600px;text-align:right;top:481.62px;font-size:18px;line-height:18px;font-family:'Liberation Serif', serif;color:#000;font-weight:normal;font-style:normal;">20</div>
<div class="t" style="left:443px;width:600px;text-align:right;top:481.62px;font-size:18px;line-height:18px;font-family:'Liberation Serif', serif;color:#000;font-weight:normal;font-style:normal;">168</div>
<div class="r" style="left:49px;top:501px;width:1004px;height:1px;background-image:linear-gradient(to right,#000 50%,transparent 50%);background-size:2px 1px;"></div>
<div class="t" style="left:48px;width:113px;text-align:center;top:507.63px;font-size:18px;line-height:18px;font-family:'Liberation Serif', serif;color:#000;font-weight:normal;font-style:normal;">T01-23*23</div>
<div class="t" style="left:161px;width:376px;text-align:center;top:507.63px;font-size:18px;line-height:18px;font-family:'Liberation Serif', serif;color:#000;font-weight:normal;font-style:normal;">Đá răm kết thô 23*23</div>
<div class="t" style="left:537px;width:64px;text-align:center;top:507.63px;font-size:18px;line-height:18px;font-family:'Liberation Serif', serif;color:#000;font-weight:normal;font-style:normal;">Hộp</div>
<div class="t" style="left:104px;width:600px;text-align:right;top:507.63px;font-size:18px;line-height:18px;font-family:'Liberation Serif', serif;color:#000;font-weight:normal;font-style:normal;">251</div>
<div class="t" style="left:217px;width:600px;text-align:right;top:507.63px;font-size:18px;line-height:18px;font-family:'Liberation Serif', serif;color:#000;font-weight:normal;font-style:normal;">456</div>
<div class="t" style="left:330px;width:600px;text-align:right;top:507.63px;font-size:18px;line-height:18px;font-family:'Liberation Serif', serif;color:#000;font-weight:normal;font-style:normal;">-</div>
<div class="t" style="left:443px;width:600px;text-align:right;top:507.63px;font-size:18px;line-height:18px;font-family:'Liberation Serif', serif;color:#000;font-weight:normal;font-style:normal;">707</div>
<div class="r" style="left:49px;top:527px;width:1004px;height:1px;background-image:linear-gradient(to right,#000 50%,transparent 50%);background-size:2px 1px;"></div>
<div class="t" style="left:48px;width:113px;text-align:center;top:533.62px;font-size:18px;line-height:18px;font-family:'Liberation Serif', serif;color:#000;font-weight:normal;font-style:normal;">T01-23*48</div>
<div class="t" style="left:161px;width:376px;text-align:center;top:533.62px;font-size:18px;line-height:18px;font-family:'Liberation Serif', serif;color:#000;font-weight:normal;font-style:normal;">Đá răm kết thô 23*48</div>
<div class="t" style="left:537px;width:64px;text-align:center;top:533.62px;font-size:18px;line-height:18px;font-family:'Liberation Serif', serif;color:#000;font-weight:normal;font-style:normal;">Hộp</div>
<div class="t" style="left:104px;width:600px;text-align:right;top:533.62px;font-size:18px;line-height:18px;font-family:'Liberation Serif', serif;color:#000;font-weight:normal;font-style:normal;">313</div>
<div class="t" style="left:217px;width:600px;text-align:right;top:533.62px;font-size:18px;line-height:18px;font-family:'Liberation Serif', serif;color:#000;font-weight:normal;font-style:normal;">126</div>
<div class="t" style="left:330px;width:600px;text-align:right;top:533.62px;font-size:18px;line-height:18px;font-family:'Liberation Serif', serif;color:#000;font-weight:normal;font-style:normal;">-</div>
<div class="t" style="left:443px;width:600px;text-align:right;top:533.62px;font-size:18px;line-height:18px;font-family:'Liberation Serif', serif;color:#000;font-weight:normal;font-style:normal;">439</div>
<div class="r" style="left:49px;top:553px;width:1004px;height:1px;background-image:linear-gradient(to right,#000 50%,transparent 50%);background-size:2px 1px;"></div>
<div class="t" style="left:48px;width:113px;text-align:center;top:559.62px;font-size:18px;line-height:18px;font-family:'Liberation Serif', serif;color:#000;font-weight:normal;font-style:normal;">T01-23*98</div>
<div class="t" style="left:161px;width:376px;text-align:center;top:559.62px;font-size:18px;line-height:18px;font-family:'Liberation Serif', serif;color:#000;font-weight:normal;font-style:normal;">Đá răm kết thô 23*98</div>
<div class="t" style="left:537px;width:64px;text-align:center;top:559.62px;font-size:18px;line-height:18px;font-family:'Liberation Serif', serif;color:#000;font-weight:normal;font-style:normal;">Hộp</div>
<div class="t" style="left:104px;width:600px;text-align:right;top:559.62px;font-size:18px;line-height:18px;font-family:'Liberation Serif', serif;color:#000;font-weight:normal;font-style:normal;">516</div>
<div class="t" style="left:217px;width:600px;text-align:right;top:559.62px;font-size:18px;line-height:18px;font-family:'Liberation Serif', serif;color:#000;font-weight:normal;font-style:normal;">-</div>
<div class="t" style="left:330px;width:600px;text-align:right;top:559.62px;font-size:18px;line-height:18px;font-family:'Liberation Serif', serif;color:#000;font-weight:normal;font-style:normal;">-</div>
<div class="t" style="left:443px;width:600px;text-align:right;top:559.62px;font-size:18px;line-height:18px;font-family:'Liberation Serif', serif;color:#000;font-weight:normal;font-style:normal;">516</div>
<div class="r" style="left:49px;top:579px;width:1004px;height:1px;background-image:linear-gradient(to right,#000 50%,transparent 50%);background-size:2px 1px;"></div>
<div class="t" style="left:48px;width:113px;text-align:center;top:585.62px;font-size:18px;line-height:18px;font-family:'Liberation Serif', serif;color:#000;font-weight:normal;font-style:normal;">T01-48*48</div>
<div class="t" style="left:161px;width:376px;text-align:center;top:585.62px;font-size:18px;line-height:18px;font-family:'Liberation Serif', serif;color:#000;font-weight:normal;font-style:normal;">Đá răm kết thô 48*48</div>
<div class="t" style="left:537px;width:64px;text-align:center;top:585.62px;font-size:18px;line-height:18px;font-family:'Liberation Serif', serif;color:#000;font-weight:normal;font-style:normal;">Hộp</div>
<div class="t" style="left:104px;width:600px;text-align:right;top:585.62px;font-size:18px;line-height:18px;font-family:'Liberation Serif', serif;color:#000;font-weight:normal;font-style:normal;">278</div>
<div class="t" style="left:217px;width:600px;text-align:right;top:585.62px;font-size:18px;line-height:18px;font-family:'Liberation Serif', serif;color:#000;font-weight:normal;font-style:normal;">-</div>
<div class="t" style="left:330px;width:600px;text-align:right;top:585.62px;font-size:18px;line-height:18px;font-family:'Liberation Serif', serif;color:#000;font-weight:normal;font-style:normal;">-</div>
<div class="t" style="left:443px;width:600px;text-align:right;top:585.62px;font-size:18px;line-height:18px;font-family:'Liberation Serif', serif;color:#000;font-weight:normal;font-style:normal;">278</div>
<div class="r" style="left:49px;top:605px;width:1004px;height:1px;background-image:linear-gradient(to right,#000 50%,transparent 50%);background-size:2px 1px;"></div>
<div class="t" style="left:48px;width:113px;text-align:center;top:611.62px;font-size:18px;line-height:18px;font-family:'Liberation Serif', serif;color:#000;font-weight:normal;font-style:normal;">T01-48*98</div>
<div class="t" style="left:161px;width:376px;text-align:center;top:611.62px;font-size:18px;line-height:18px;font-family:'Liberation Serif', serif;color:#000;font-weight:normal;font-style:normal;">Đá răm kết thô 48*98</div>
<div class="t" style="left:537px;width:64px;text-align:center;top:611.62px;font-size:18px;line-height:18px;font-family:'Liberation Serif', serif;color:#000;font-weight:normal;font-style:normal;">Hộp</div>
<div class="t" style="left:104px;width:600px;text-align:right;top:611.62px;font-size:18px;line-height:18px;font-family:'Liberation Serif', serif;color:#000;font-weight:normal;font-style:normal;">335</div>
<div class="t" style="left:217px;width:600px;text-align:right;top:611.62px;font-size:18px;line-height:18px;font-family:'Liberation Serif', serif;color:#000;font-weight:normal;font-style:normal;">-</div>
<div class="t" style="left:330px;width:600px;text-align:right;top:611.62px;font-size:18px;line-height:18px;font-family:'Liberation Serif', serif;color:#000;font-weight:normal;font-style:normal;">-</div>
<div class="t" style="left:443px;width:600px;text-align:right;top:611.62px;font-size:18px;line-height:18px;font-family:'Liberation Serif', serif;color:#000;font-weight:normal;font-style:normal;">335</div>
<div class="r" style="left:49px;top:631px;width:1004px;height:1px;background-image:linear-gradient(to right,#000 50%,transparent 50%);background-size:2px 1px;"></div>
<div class="t" style="left:48px;width:113px;text-align:center;top:637.62px;font-size:18px;line-height:18px;font-family:'Liberation Serif', serif;color:#000;font-weight:normal;font-style:normal;">T03-15*15</div>
<div class="t" style="left:161px;width:376px;text-align:center;top:637.62px;font-size:18px;line-height:18px;font-family:'Liberation Serif', serif;color:#000;font-weight:normal;font-style:normal;">Đá vàng tĩnh gia thô 15*15</div>
<div class="t" style="left:537px;width:64px;text-align:center;top:637.62px;font-size:18px;line-height:18px;font-family:'Liberation Serif', serif;color:#000;font-weight:normal;font-style:normal;">Hộp</div>
<div class="t" style="left:104px;width:600px;text-align:right;top:637.62px;font-size:18px;line-height:18px;font-family:'Liberation Serif', serif;color:#000;font-weight:normal;font-style:normal;">251</div>
<div class="t" style="left:217px;width:600px;text-align:right;top:637.62px;font-size:18px;line-height:18px;font-family:'Liberation Serif', serif;color:#000;font-weight:normal;font-style:normal;">-</div>
<div class="t" style="left:330px;width:600px;text-align:right;top:637.62px;font-size:18px;line-height:18px;font-family:'Liberation Serif', serif;color:#000;font-weight:normal;font-style:normal;">-</div>
<div class="t" style="left:443px;width:600px;text-align:right;top:637.62px;font-size:18px;line-height:18px;font-family:'Liberation Serif', serif;color:#000;font-weight:normal;font-style:normal;">251</div>
<div class="r" style="left:49px;top:657px;width:1004px;height:1px;background-image:linear-gradient(to right,#000 50%,transparent 50%);background-size:2px 1px;"></div>
<div class="t" style="left:48px;width:113px;text-align:center;top:663.62px;font-size:18px;line-height:18px;font-family:'Liberation Serif', serif;color:#000;font-weight:normal;font-style:normal;">T03-23*23</div>
<div class="t" style="left:161px;width:376px;text-align:center;top:663.62px;font-size:18px;line-height:18px;font-family:'Liberation Serif', serif;color:#000;font-weight:normal;font-style:normal;">Đá vàng tĩnh gia thô 23*23</div>
<div class="t" style="left:537px;width:64px;text-align:center;top:663.62px;font-size:18px;line-height:18px;font-family:'Liberation Serif', serif;color:#000;font-weight:normal;font-style:normal;">Hộp</div>
<div class="t" style="left:104px;width:600px;text-align:right;top:663.62px;font-size:18px;line-height:18px;font-family:'Liberation Serif', serif;color:#000;font-weight:normal;font-style:normal;">364</div>
<div class="t" style="left:217px;width:600px;text-align:right;top:663.62px;font-size:18px;line-height:18px;font-family:'Liberation Serif', serif;color:#000;font-weight:normal;font-style:normal;">163</div>
<div class="t" style="left:330px;width:600px;text-align:right;top:663.62px;font-size:18px;line-height:18px;font-family:'Liberation Serif', serif;color:#000;font-weight:normal;font-style:normal;">-</div>
<div class="t" style="left:443px;width:600px;text-align:right;top:663.62px;font-size:18px;line-height:18px;font-family:'Liberation Serif', serif;color:#000;font-weight:normal;font-style:normal;">527</div>
<div class="r" style="left:49px;top:683px;width:1004px;height:1px;background-image:linear-gradient(to right,#000 50%,transparent 50%);background-size:2px 1px;"></div>
<div class="t" style="left:48px;width:113px;text-align:center;top:689.62px;font-size:18px;line-height:18px;font-family:'Liberation Serif', serif;color:#000;font-weight:normal;font-style:normal;">T03-23*48</div>
<div class="t" style="left:161px;width:376px;text-align:center;top:689.62px;font-size:18px;line-height:18px;font-family:'Liberation Serif', serif;color:#000;font-weight:normal;font-style:normal;">Đá vàng tĩnh gia thô 23*48</div>
<div class="t" style="left:537px;width:64px;text-align:center;top:689.62px;font-size:18px;line-height:18px;font-family:'Liberation Serif', serif;color:#000;font-weight:normal;font-style:normal;">Hộp</div>
<div class="t" style="left:104px;width:600px;text-align:right;top:689.62px;font-size:18px;line-height:18px;font-family:'Liberation Serif', serif;color:#000;font-weight:normal;font-style:normal;">184</div>
<div class="t" style="left:217px;width:600px;text-align:right;top:689.62px;font-size:18px;line-height:18px;font-family:'Liberation Serif', serif;color:#000;font-weight:normal;font-style:normal;">127</div>
<div class="t" style="left:330px;width:600px;text-align:right;top:689.62px;font-size:18px;line-height:18px;font-family:'Liberation Serif', serif;color:#000;font-weight:normal;font-style:normal;">-</div>
<div class="t" style="left:443px;width:600px;text-align:right;top:689.62px;font-size:18px;line-height:18px;font-family:'Liberation Serif', serif;color:#000;font-weight:normal;font-style:normal;">311</div>
<div class="r" style="left:49px;top:709px;width:1004px;height:1px;background-image:linear-gradient(to right,#000 50%,transparent 50%);background-size:2px 1px;"></div>
<div class="t" style="left:48px;width:113px;text-align:center;top:715.62px;font-size:18px;line-height:18px;font-family:'Liberation Serif', serif;color:#000;font-weight:normal;font-style:normal;">T03-23*98</div>
<div class="t" style="left:161px;width:376px;text-align:center;top:715.62px;font-size:18px;line-height:18px;font-family:'Liberation Serif', serif;color:#000;font-weight:normal;font-style:normal;">Đá vàng tĩnh gia thô 23*98</div>
<div class="t" style="left:537px;width:64px;text-align:center;top:715.62px;font-size:18px;line-height:18px;font-family:'Liberation Serif', serif;color:#000;font-weight:normal;font-style:normal;">Hộp</div>
<div class="t" style="left:104px;width:600px;text-align:right;top:715.62px;font-size:18px;line-height:18px;font-family:'Liberation Serif', serif;color:#000;font-weight:normal;font-style:normal;">11</div>
<div class="t" style="left:217px;width:600px;text-align:right;top:715.62px;font-size:18px;line-height:18px;font-family:'Liberation Serif', serif;color:#000;font-weight:normal;font-style:normal;">-</div>
<div class="t" style="left:330px;width:600px;text-align:right;top:715.62px;font-size:18px;line-height:18px;font-family:'Liberation Serif', serif;color:#000;font-weight:normal;font-style:normal;">-</div>
<div class="t" style="left:443px;width:600px;text-align:right;top:715.62px;font-size:18px;line-height:18px;font-family:'Liberation Serif', serif;color:#000;font-weight:normal;font-style:normal;">11</div>
<div class="r" style="left:49px;top:735px;width:1004px;height:1px;background-image:linear-gradient(to right,#000 50%,transparent 50%);background-size:2px 1px;"></div>
<div class="t" style="left:48px;width:113px;text-align:center;top:741.62px;font-size:18px;line-height:18px;font-family:'Liberation Serif', serif;color:#000;font-weight:normal;font-style:normal;">T03-48*48</div>
<div class="t" style="left:161px;width:376px;text-align:center;top:741.62px;font-size:18px;line-height:18px;font-family:'Liberation Serif', serif;color:#000;font-weight:normal;font-style:normal;">Đá vàng tĩnh gia thô 48*48</div>
<div class="t" style="left:537px;width:64px;text-align:center;top:741.62px;font-size:18px;line-height:18px;font-family:'Liberation Serif', serif;color:#000;font-weight:normal;font-style:normal;">Hộp</div>
<div class="t" style="left:104px;width:600px;text-align:right;top:741.62px;font-size:18px;line-height:18px;font-family:'Liberation Serif', serif;color:#000;font-weight:normal;font-style:normal;">268</div>
<div class="t" style="left:217px;width:600px;text-align:right;top:741.62px;font-size:18px;line-height:18px;font-family:'Liberation Serif', serif;color:#000;font-weight:normal;font-style:normal;">-</div>
<div class="t" style="left:330px;width:600px;text-align:right;top:741.62px;font-size:18px;line-height:18px;font-family:'Liberation Serif', serif;color:#000;font-weight:normal;font-style:normal;">-</div>
<div class="t" style="left:443px;width:600px;text-align:right;top:741.62px;font-size:18px;line-height:18px;font-family:'Liberation Serif', serif;color:#000;font-weight:normal;font-style:normal;">268</div>
<div class="r" style="left:49px;top:761px;width:1004px;height:1px;background-image:linear-gradient(to right,#000 50%,transparent 50%);background-size:2px 1px;"></div>
<div class="t" style="left:48px;width:113px;text-align:center;top:767.62px;font-size:18px;line-height:18px;font-family:'Liberation Serif', serif;color:#000;font-weight:normal;font-style:normal;">T03-48*98</div>
<div class="t" style="left:161px;width:376px;text-align:center;top:767.62px;font-size:18px;line-height:18px;font-family:'Liberation Serif', serif;color:#000;font-weight:normal;font-style:normal;">Đá vàng tĩnh gia thô 48*98</div>
<div class="t" style="left:537px;width:64px;text-align:center;top:767.62px;font-size:18px;line-height:18px;font-family:'Liberation Serif', serif;color:#000;font-weight:normal;font-style:normal;">Hộp</div>
<div class="t" style="left:104px;width:600px;text-align:right;top:767.62px;font-size:18px;line-height:18px;font-family:'Liberation Serif', serif;color:#000;font-weight:normal;font-style:normal;">355</div>
<div class="t" style="left:217px;width:600px;text-align:right;top:767.62px;font-size:18px;line-height:18px;font-family:'Liberation Serif', serif;color:#000;font-weight:normal;font-style:normal;">127</div>
<div class="t" style="left:330px;width:600px;text-align:right;top:767.62px;font-size:18px;line-height:18px;font-family:'Liberation Serif', serif;color:#000;font-weight:normal;font-style:normal;">-</div>
<div class="t" style="left:443px;width:600px;text-align:right;top:767.62px;font-size:18px;line-height:18px;font-family:'Liberation Serif', serif;color:#000;font-weight:normal;font-style:normal;">482</div>
<div class="r" style="left:49px;top:787px;width:1004px;height:1px;background-image:linear-gradient(to right,#000 50%,transparent 50%);background-size:2px 1px;"></div>
<div class="t" style="left:48px;width:113px;text-align:center;top:793.62px;font-size:18px;line-height:18px;font-family:'Liberation Serif', serif;color:#000;font-weight:normal;font-style:normal;">T06-15*15</div>
<div class="t" style="left:161px;width:376px;text-align:center;top:793.62px;font-size:18px;line-height:18px;font-family:'Liberation Serif', serif;color:#000;font-weight:normal;font-style:normal;">Đá trắng nghệ an thô 15*15</div>
<div class="t" style="left:537px;width:64px;text-align:center;top:793.62px;font-size:18px;line-height:18px;font-family:'Liberation Serif', serif;color:#000;font-weight:normal;font-style:normal;">Hộp</div>
<div class="t" style="left:104px;width:600px;text-align:right;top:793.62px;font-size:18px;line-height:18px;font-family:'Liberation Serif', serif;color:#000;font-weight:normal;font-style:normal;">416</div>
<div class="t" style="left:217px;width:600px;text-align:right;top:793.62px;font-size:18px;line-height:18px;font-family:'Liberation Serif', serif;color:#000;font-weight:normal;font-style:normal;">-</div>
<div class="t" style="left:330px;width:600px;text-align:right;top:793.62px;font-size:18px;line-height:18px;font-family:'Liberation Serif', serif;color:#000;font-weight:normal;font-style:normal;">-</div>
<div class="t" style="left:443px;width:600px;text-align:right;top:793.62px;font-size:18px;line-height:18px;font-family:'Liberation Serif', serif;color:#000;font-weight:normal;font-style:normal;">416</div>
<div class="r" style="left:49px;top:813px;width:1004px;height:1px;background-image:linear-gradient(to right,#000 50%,transparent 50%);background-size:2px 1px;"></div>
<div class="r" style="left:1185px;top:238px;width:169px;height:36px;background:#ccffcc;border:1px solid #000;"></div>
<div class="t" style="left:1185px;width:171px;text-align:center;top:247.25px;font-size:20px;line-height:20px;font-family:'Liberation Serif', serif;color:#0000ff;font-weight:bold;font-style:italic;">Nhập liệu</div>
<div class="r" style="left:1185px;top:275.5px;width:169px;height:36px;background:#ccffcc;border:1px solid #000;"></div>
<div class="t" style="left:1185px;width:171px;text-align:center;top:284.75px;font-size:20px;line-height:20px;font-family:'Liberation Serif', serif;color:#0000ff;font-weight:bold;font-style:italic;">Menu điều khiển</div>
<div class="r" style="left:1185px;top:313.5px;width:169px;height:36px;background:#ccffcc;border:1px solid #000;"></div>
<div class="t" style="left:1185px;width:171px;text-align:center;top:322.75px;font-size:20px;line-height:20px;font-family:'Liberation Serif', serif;color:#0000ff;font-weight:bold;font-style:italic;">Chi tiết NXT</div>
<div class="r" style="left:1185px;top:351.5px;width:169px;height:36px;background:#ccffcc;border:1px solid #000;"></div>
<div class="t" style="left:1185px;width:171px;text-align:center;top:360.75px;font-size:20px;line-height:20px;font-family:'Liberation Serif', serif;color:#0000ff;font-weight:bold;font-style:italic;">Sổ kho in</div>
<svg class="r" style="left:492px;top:342px;filter:blur(0.9px)" width="130" height="130" viewBox="0 0 130 130"><defs><mask id="km"><rect width="130" height="130" fill="#fff"/><text transform="translate(37 0) scale(0.86 1)" x="0" y="96.6" font-family="Liberation Sans" font-weight="bold" font-size="89" fill="#000" stroke="#000" stroke-width="2.4" stroke-linejoin="round">K</text></mask></defs><rect width="130" height="130" rx="19" fill="rgb(196,36,36)" fill-opacity="0.25" mask="url(#km)"/></svg>
<div class="t" style="left:642px;top:360.39px;font-size:97px;line-height:97px;font-family:'Liberation Sans', sans-serif;color:rgba(90,90,90,0.33);font-weight:bold;font-style:normal;letter-spacing:-4px;filter:blur(0.9px);transform:scaleX(0.95);transform-origin:0 0;">KASH</div>
<div class="t" style="left:892px;top:360.39px;font-size:97px;line-height:97px;font-family:'Liberation Sans', sans-serif;color:rgba(90,90,90,0.33);font-weight:bold;font-style:normal;filter:blur(0.9px);transform:scaleX(0.95);transform-origin:0 0;">I</div>
</body></html>
